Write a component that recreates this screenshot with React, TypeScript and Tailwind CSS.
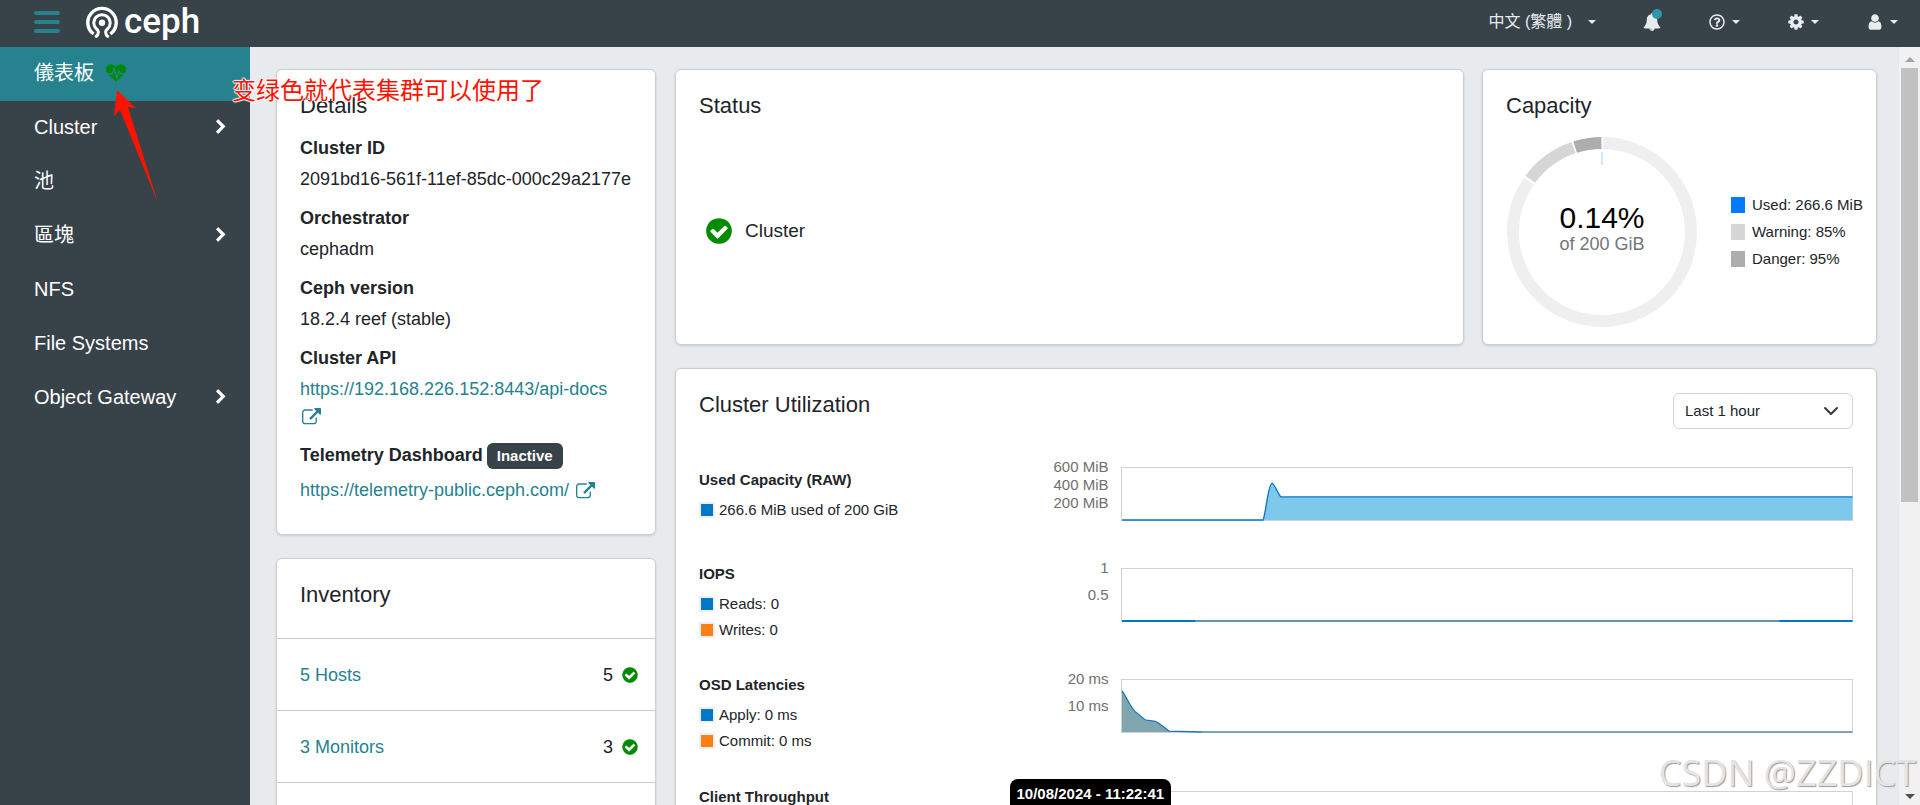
import { useState } from 'react';
import type { ReactNode } from 'react';
import { FaRegQuestionCircle } from 'react-icons/fa';

const paths = {
  heartbeat:
    'M1280 1024h305q-5 6-10 10.5t-9 7.5l-3 4-623 600q-18 18-44 18t-44-18l-624-602q-5-2-21-20h369q22 0 39.5-13.5t22.5-34.5l70-281 190 667q6 20 23 33t39 13q21 0 38-13t23-33l146-485 56 112q18 35 57 35zm512-428q0 145-103 300h-369l-111-221q-8-17-25.5-27t-36.5-8q-45 5-56 46l-129 430-196-686q-6-20-23.5-33t-39.5-13-39 13.5-22 34.5l-116 464h-423q-103-155-103-300 0-220 127-344t351-124q62 0 126.5 21.5t120 58 95.5 68.5 76 68q36-36 76-68t95.5-68.5 120-58 126.5-21.5q224 0 351 124t127 344z',
  chevron:
    'M1363 877l-742 742q-19 19-45 19t-45-19l-166-166q-19-19-19-45t19-45l531-531-531-531q-19-19-19-45t19-45l166-166q19-19 45-19t45 19l742 742q19 19 19 45t-19 45z',
  check:
    'M1412 734q0-28-18-46l-91-90q-19-19-45-19t-45 19l-408 407-226-226q-19-19-45-19t-45 19l-91 90q-18 18-18 46 0 27 18 45l362 362q19 19 45 19 27 0 46-19l543-543q18-18 18-45zm252 162q0 209-103 385.5t-279.5 279.5-385.5 103-385.5-103-279.5-279.5-103-385.5 103-385.5 279.5-279.5 385.5-103 385.5 103 279.5 279.5 103 385.5z',
  external:
    'M1408 928v320q0 119-84.5 203.5t-203.5 84.5h-832q-119 0-203.5-84.5t-84.5-203.5v-832q0-119 84.5-203.5t203.5-84.5h704q14 0 23 9t9 23v64q0 14-9 23t-23 9h-704q-66 0-113 47t-47 113v832q0 66 47 113t113 47h832q66 0 113-47t47-113v-320q0-14 9-23t23-9h64q14 0 23 9t9 23zm384-864v512q0 26-19 45t-45 19-45-19l-176-176-652 652q-10 10-23 10t-23-10l-114-114q-10-10-10-23t10-23l652-652-176-176q-19-19-19-45t19-45 45-19h512q26 0 45 19t19 45z',
  bell: 'M912 1696q0-16-16-16-59 0-101.5-42.5t-42.5-101.5q0-16-16-16t-16 16q0 73 51.5 124.5t124.5 51.5q16 0 16-16zm816-288q0 52-38 90t-90 38h-448q0 106-75 181t-181 75-181-75-75-181h-448q-52 0-90-38t-38-90q50-42 91-88t85-119.5 74.5-158.5 50-206 19.5-260q0-152 117-282.5t307-158.5q-8-19-8-39 0-40 28-68t68-28 68 28 28 68q0 20-8 39 190 28 307 158.5t117 282.5q0 139 19.5 260t50 206 74.5 158.5 85 119.5 91 88z',
  cog: 'M1152 896q0-106-75-181t-181-75-181 75-75 181 75 181 181 75 181-75 75-181zm512-109v222q0 12-8 23t-20 13l-185 28q-19 54-39 91 35 50 107 138 10 12 10 25t-9 23q-27 37-99 108t-94 71q-12 0-26-9l-138-108q-44 23-91 38-16 136-29 186-7 28-36 28h-222q-14 0-24.5-8.5t-11.5-21.5l-28-184q-49-16-90-37l-141 107q-10 9-25 9-14 0-25-11-126-114-165-168-7-10-7-23 0-12 8-23 15-21 51-66.5t54-70.5q-27-50-41-99l-183-27q-13-2-21-12.5t-8-23.5v-222q0-12 8-23t19-13l186-28q14-46 39-92-40-57-107-138-10-12-10-24 0-10 9-23 26-36 98.5-107.5t94.5-71.5q13 0 26 10l138 107q44-23 91-38 16-136 29-186 7-28 36-28h222q14 0 24.5 8.5t11.5 21.5l28 184q49 16 90 37l142-107q9-9 24-9 13 0 25 10 129 119 165 170 7 8 7 22 0 12-8 23-15 21-51 66.5t-54 70.5q26 50 41 98l183 28q13 2 21 12.5t8 23.5z',
  user: 'M1536 1399q0 109-62.5 187t-150.5 78h-854q-88 0-150.5-78t-62.5-187q0-85 8.5-160.5t31.5-152 58.5-131 94-89 134.5-34.5q131 128 313 128t313-128q76 0 134.5 34.5t94 89 58.5 131 31.5 152 8.5 160.5zm-256-887q0 159-112.5 271.5t-271.5 112.5-271.5-112.5-112.5-271.5 112.5-271.5 271.5-112.5 271.5 112.5 112.5 271.5z',
};

function Icon({ name, className }: { name: keyof typeof paths; className: string }) {
  return (
    <svg viewBox="0 0 1792 1792" fill="currentColor" aria-hidden="true" className={className}>
      <path d={paths[name]} />
    </svg>
  );
}

function Caret() {
  return (
    <svg viewBox="0 0 8 4" className="h-1 w-2" fill="currentColor" aria-hidden="true">
      <path d="M0 0h8L4 4z" />
    </svg>
  );
}

function Logo() {
  return (
    <a href="#home" className="flex items-center gap-1.5 text-white">
      <svg viewBox="0 0 32 32" className="h-8 w-8" fill="none" stroke="currentColor" aria-hidden="true">
        <path d="M7.600 28A14.200 14.200 0 1 1 24.400 28" strokeWidth="3.4" />
        <path d="M9.200 31.200Q12.800 29 12.300 25.500Q12 24.200 10.600 23A8.200 8.200 0 1 1 21.400 23Q20 24.200 19.700 25.500Q19.200 29 22.800 31.200" strokeWidth="3" />
        <circle cx="16" cy="16.800" r="3.2" fill="currentColor" stroke="none" />
      </svg>
      <span className="font-[Roboto,sans-serif] text-[35px] leading-8 font-medium">ceph</span>
    </a>
  );
}

function Header() {
  return (
    <header className="flex h-[47px] shrink-0 items-center justify-between bg-[#374249] pr-[22px] pb-[3px] pl-[34px] text-[#e9ecef]">
      <div className="flex items-center gap-[26px]">
        <button type="button" aria-label="Toggle navigation" className="flex w-[26px] flex-col gap-[5px]">
          <span className="h-1 rounded-xs bg-[#25828e]" />
          <span className="h-1 rounded-xs bg-[#25828e]" />
          <span className="h-1 rounded-xs bg-[#25828e]" />
        </button>
        <Logo />
      </div>
      <div className="flex items-center gap-[47px]">
        <button type="button" className="flex items-center gap-4 text-base">
          中文 (繁體 ) <Caret />
        </button>
        <button type="button" aria-label="Notifications" className="relative">
          <Icon name="bell" className="size-[18px]" />
          <span className="absolute -top-1 -right-px size-2.5 rounded-full bg-[#2b99a8]" />
        </button>
        <button type="button" aria-label="Help" className="flex items-center gap-1.5">
          <span className="flex size-[18px] items-center justify-center">
            <FaRegQuestionCircle className="size-4" />
          </span>
          <Caret />
        </button>
        <button type="button" aria-label="Settings" className="flex items-center gap-1.5">
          <Icon name="cog" className="size-[18px]" />
          <Caret />
        </button>
        <button type="button" aria-label="User" className="flex items-center gap-1.5">
          <Icon name="user" className="size-[18px]" />
          <Caret />
        </button>
      </div>
    </header>
  );
}

const navItems = [
  { label: '儀表板', active: true },
  { label: 'Cluster', expandable: true },
  { label: '池' },
  { label: '區塊', expandable: true },
  { label: 'NFS' },
  { label: 'File Systems' },
  { label: 'Object Gateway', expandable: true },
];

function Sidebar() {
  return (
    <nav className="w-[250px] shrink-0 bg-[#374249] text-xl text-white">
      <ul>
        {navItems.map((item) => (
          <li key={item.label}>
            <a
              href="#nav"
              className={`flex h-[54px] items-center pr-[21px] pb-0.5 pl-[34px] ${item.active ? 'bg-[#25828e]' : ''}`}
            >
              {item.label}
              {item.active && <Icon name="heartbeat" className="ml-3 size-5 text-[#008a00]" />}
              {item.expandable && <Icon name="chevron" className="ml-auto size-4" />}
            </a>
          </li>
        ))}
      </ul>
    </nav>
  );
}

function Card({ title, className = '', children }: { title?: string; className?: string; children: ReactNode }) {
  return (
    <section className={`rounded-md border border-[#cccfd1] bg-white shadow-sm ${className}`}>
      {title && <h2 className="px-[23px] pt-6 text-[22px] leading-6">{title}</h2>}
      {children}
    </section>
  );
}

function ExternalLink({ children }: { children: string }) {
  return (
    <a href="#external" className="text-[#25828e]">
      {children} <Icon name="external" className="ml-0.5 inline size-[19px]" />
    </a>
  );
}

function Details() {
  return (
    <Card title="Details">
      <dl className="px-[23px] pt-[17px] pb-[30px] text-lg leading-[27px]">
        <dt className="mb-1 font-bold">Cluster ID</dt>
        <dd className="mb-3">2091bd16-561f-11ef-85dc-000c29a2177e</dd>
        <dt className="mb-1 font-bold">Orchestrator</dt>
        <dd className="mb-3">cephadm</dd>
        <dt className="mb-1 font-bold">Ceph version</dt>
        <dd className="mb-3">18.2.4 reef (stable)</dd>
        <dt className="mb-1 font-bold">Cluster API</dt>
        <dd className="mb-3">
          <ExternalLink>https://192.168.226.152:8443/api-docs</ExternalLink>
        </dd>
        <dt className="mb-2 flex items-center gap-1 font-bold">
          Telemetry Dashboard
          <span className="rounded-md bg-[#374249] px-2.5 text-[15px] leading-[26px] text-white">Inactive</span>
        </dt>
        <dd>
          <ExternalLink>https://telemetry-public.ceph.com/</ExternalLink>
        </dd>
      </dl>
    </Card>
  );
}

const inventory = [
  { label: '5 Hosts', count: 5 },
  { label: '3 Monitors', count: 3 },
  { label: '3 Managers', count: 3 },
];

function Inventory() {
  return (
    <Card title="Inventory">
      <ul className="mt-[31px] text-lg">
        {inventory.map((item) => (
          <li
            key={item.label}
            className="flex h-[72px] items-center justify-between border-t border-[#c8cacc] pr-4 pl-[23px]"
          >
            <a href="#inventory" className="text-[#25828e]">
              {item.label}
            </a>
            <span className="flex items-center gap-2">
              {item.count}
              <Icon name="check" className="size-[18px] text-[#008a00]" />
            </span>
          </li>
        ))}
      </ul>
    </Card>
  );
}

function Status() {
  return (
    <Card title="Status">
      <div className="mt-[97px] flex items-center gap-[11px] px-7 text-[19px] leading-8">
        <Icon name="check" className="size-[30px] text-[#008a00]" />
        Cluster
      </div>
    </Card>
  );
}

function Capacity() {
  const ring = { cx: 95, cy: 95, r: 89, fill: 'none', strokeWidth: 12, pathLength: 1000 };
  const legend = [
    { color: 'bg-[#007bff]', text: 'Used: 266.6 MiB' },
    { color: 'bg-[#d6d6d6]', text: 'Warning: 85%' },
    { color: 'bg-[#adadad]', text: 'Danger: 95%' },
  ];
  return (
    <Card title="Capacity" className="pb-[17px]">
      <div className="mt-[19px] flex items-center gap-[34px] pl-6">
        <div className="relative size-[190px] shrink-0">
          <svg viewBox="0 0 190 190" className="size-full" aria-hidden="true">
            <g transform="rotate(-90 95 95)">
              <circle {...ring} stroke="#efefef" strokeDasharray="845 155" strokeDashoffset="-2" />
              <circle {...ring} stroke="#d6d6d6" strokeDasharray="97 903" strokeDashoffset="-851" />
              <circle {...ring} stroke="#adadad" strokeDasharray="48 952" strokeDashoffset="-951" />
            </g>
            <path d="M95 15v13" stroke="#cfe6fe" strokeWidth="2" />
          </svg>
          <div className="absolute inset-0 flex flex-col items-center justify-center pb-2">
            <span className="text-3xl leading-8 text-black">0.14%</span>
            <span className="text-lg leading-5 text-[#72767b]">of 200 GiB</span>
          </div>
        </div>
        <ul className="flex flex-col gap-[5px] text-[15px] leading-[22px] whitespace-nowrap">
          {legend.map((l) => (
            <li key={l.text} className="flex items-center gap-[7px]">
              <span className={`h-4 w-3.5 ${l.color}`} />
              {l.text}
            </li>
          ))}
        </ul>
      </div>
    </Card>
  );
}

type Series = { color: string; text: string };

function UtilRow({
  title,
  series,
  ticks,
  className,
  overlay,
  children,
}: {
  title: string;
  series: Series[];
  ticks: string[];
  className: string;
  overlay?: ReactNode;
  children?: ReactNode;
}) {
  return (
    <div className={`flex text-[15px] ${className}`}>
      <div className="w-1/4 shrink-0 self-end leading-[22px]">
        <h3 className="mb-2 font-bold">{title}</h3>
        <ul className="flex flex-col gap-1">
          {series.map((s) => (
            <li key={s.text} className="flex items-center gap-1">
              <span className={`size-4 border-2 border-[#f0f0f0] ${s.color}`} />
              {s.text}
            </li>
          ))}
        </ul>
      </div>
      <div className="relative flex min-w-0 flex-1 gap-3">
        <ul
          className={`flex w-[121px] shrink-0 flex-col text-right leading-[18px] text-[#6f6f6f] ${ticks.length < 3 ? 'gap-[9px]' : ''}`}
        >
          {ticks.map((t) => (
            <li key={t}>{t}</li>
          ))}
        </ul>
        <div className="mt-[9px] h-[54px] flex-1 border border-[#d2d2d2]">
          <svg viewBox="0 0 730 53" preserveAspectRatio="none" className="h-full w-full overflow-visible" aria-hidden="true">
            {children}
          </svg>
        </div>
        {overlay}
      </div>
    </div>
  );
}

const blue = 'bg-[#0078c8]';
const orange = 'bg-[#ff7f17]';

function Utilization() {
  const [range, setRange] = useState('Last 1 hour');
  return (
    <Card className="col-span-2 px-[23px] pt-6">
      <div className="flex items-start justify-between">
        <h2 className="text-[22px] leading-6">Cluster Utilization</h2>
        <div className="relative">
          <select
            aria-label="Time range"
            value={range}
            onChange={(e) => setRange(e.target.value)}
            className="h-9 w-[180px] appearance-none rounded-md border border-[#ced4da] bg-white px-[11px] text-[15px]"
          >
            <option>Last 1 hour</option>
            <option>Last 6 hours</option>
            <option>Last 24 hours</option>
          </select>
          <svg
            viewBox="0 0 16 16"
            className="pointer-events-none absolute top-2.5 right-3.5 size-4"
            fill="none"
            stroke="#343a40"
            strokeWidth="2"
            strokeLinecap="round"
            strokeLinejoin="round"
            aria-hidden="true"
          >
            <path d="m2 5 6 6 6-6" />
          </svg>
        </div>
      </div>

      <UtilRow
        title="Used Capacity (RAW)"
        series={[{ color: blue, text: '266.6 MiB used of 200 GiB' }]}
        ticks={['600 MiB', '400 MiB', '200 MiB']}
        className="mt-[29px] pb-[38px]"
      >
        <path d="M141 53C144 45 146 16 150 15.500C152 15.500 156 27 159 29.500H730V53Z" fill="#7ec8ec" />
        <path
          d="M0 53H141C144 45 146 16 150 15.500C152 15.500 156 27 159 29.500H730"
          fill="none"
          stroke="#0078c8"
          strokeWidth="1.3"
        />
      </UtilRow>
      <UtilRow
        title="IOPS"
        series={[
          { color: blue, text: 'Reads: 0' },
          { color: orange, text: 'Writes: 0' },
        ]}
        ticks={['1', '0.5']}
        className="pt-1 pb-[29px] [&>div:last-child]:-mt-1"
      >
        <path d="M0 53H730" stroke="#0078c8" strokeWidth="2" />
        <path d="M73 53H657" stroke="#6194aa" strokeWidth="2" />
      </UtilRow>
      <UtilRow
        title="OSD Latencies"
        series={[
          { color: blue, text: 'Apply: 0 ms' },
          { color: orange, text: 'Commit: 0 ms' },
        ]}
        ticks={['20 ms', '10 ms']}
        className="pt-1 pb-[30px] [&>div:last-child]:-mt-1"
      >
        <path d="M0 11C5 18 8 27 13 32L23 40.500C28 42 32 41 36 43.500L47 52L80 53H0Z" fill="#7fa6af" />
        <path
          d="M0 11C5 18 8 27 13 32L23 40.500C28 42 32 41 36 43.500L47 52L80 53"
          fill="none"
          stroke="#1b78b8"
          strokeWidth="1.3"
        />
        <path d="M80 53H730" stroke="#5a8ba8" strokeWidth="1.600" />
      </UtilRow>
      <UtilRow
        title="Client Throughput"
        series={[
          { color: blue, text: 'Reads: 0 B/s' },
          { color: orange, text: 'Writes: 0 B/s' },
        ]}
        ticks={[]}
        className="pt-1 pb-[30px] [&>div:last-child]:-mt-1"
        overlay={
          <div
            role="tooltip"
            className="absolute top-[-3px] left-[22px] rounded-lg bg-black px-[7px] pt-1 pb-20 leading-[22px] font-bold whitespace-nowrap text-white"
          >
            10/08/2024 - 11:22:41
          </div>
        }
      />
    </Card>
  );
}

function Scrollbar() {
  return (
    <div aria-hidden="true" className="flex w-[21px] shrink-0 flex-col items-center bg-[#f1f1f1]">
      <div className="flex h-[21px] items-center">
        <svg viewBox="0 0 10 5" className="mt-1 h-[5px] w-2.5" fill="#a3a3a3">
          <path d="M0 5h10L5 0z" />
        </svg>
      </div>
      <div className="h-[434px] w-[17px] bg-[#c1c1c1]" />
      <div className="mt-auto flex h-[17px] items-center">
        <svg viewBox="0 0 10 5" className="h-[5px] w-2.5" fill="#505050">
          <path d="M0 0h10L5 5z" />
        </svg>
      </div>
    </div>
  );
}

export default function App() {
  return (
    <div className="relative flex h-screen flex-col overflow-hidden bg-[#e8ebee] font-['Liberation_Sans','Noto_Sans_CJK_TC',sans-serif] text-[#212529]">
      <Header />
      <div className="flex min-h-0 flex-1">
        <Sidebar />
        <main className="grid min-w-0 flex-1 grid-cols-[minmax(0,380fr)_minmax(0,1202fr)] items-start gap-[19px] overflow-hidden pt-[22px] pr-[22px] pl-[26px]">
          <div className="flex flex-col gap-[23px]">
            <Details />
            <Inventory />
          </div>
          <div className="grid grid-cols-[minmax(0,789fr)_minmax(0,395fr)] gap-x-[18px] gap-y-[23px]">
            <Status />
            <Capacity />
            <Utilization />
          </div>
        </main>
        <Scrollbar />
      </div>

      <svg viewBox="0 0 44 118" className="absolute top-[90px] left-[114px] h-[118px] w-11" aria-hidden="true">
        <path d="M3 0L22 18L14 17L44 113L6 20L0 26Z" fill="#fe1300" />
      </svg>
      <p className="absolute top-[71px] left-[232px] font-['Noto_Sans_CJK_SC',sans-serif] text-2xl leading-9 whitespace-nowrap text-[#fe1300] [text-shadow:0_0_1px_#fff,1px_0_1px_#fff,-1px_0_1px_#fff,0_1px_1px_#fff,0_-1px_1px_#fff]">
        变绿色就代表集群可以使用了
      </p>
      <p className="absolute right-1 bottom-2 font-['Open_Sans',sans-serif] text-4xl leading-12 whitespace-nowrap text-[#e4e4e4] [text-shadow:1px_1px_1px_#999]">
        CSDN @ZZDICT
      </p>
    </div>
  );
}
